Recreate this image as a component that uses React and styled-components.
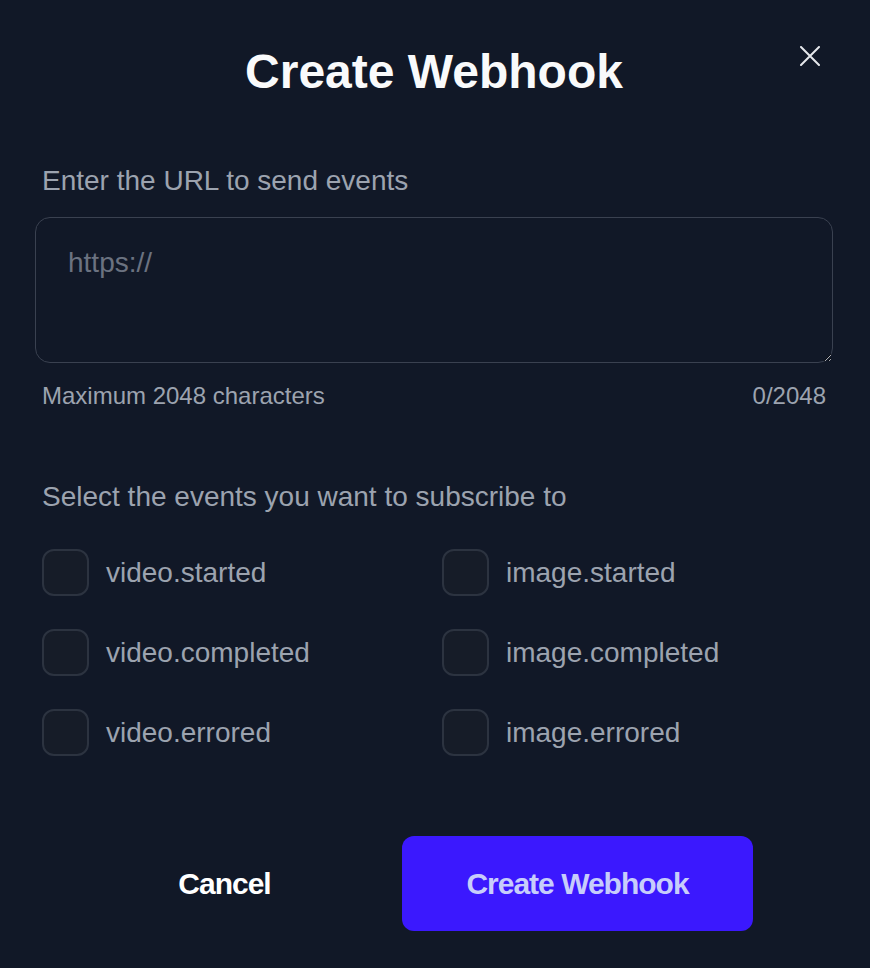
import React, { useState } from 'react';
import styled, { createGlobalStyle } from 'styled-components';

const GlobalStyle = createGlobalStyle`
  html, body {
    margin: 0;
    padding: 0;
    background: #111827;
  }
  body {
    font-family: "Liberation Sans", Arial, Helvetica, sans-serif;
  }
`;

const Dialog = styled.div`
  position: relative;
  width: 870px;
  height: 968px;
  box-sizing: border-box;
  padding: 44px 37px 0 35px;
  background: #111827;
`;

const Title = styled.h1`
  margin: 0;
  text-align: center;
  font-size: 48px;
  line-height: 56px;
  font-weight: 700;
  color: #f9fafb;
`;

const CloseButton = styled.button`
  position: absolute;
  top: 44px;
  right: 48px;
  width: 24px;
  height: 24px;
  padding: 0;
  border: none;
  background: transparent;
  cursor: pointer;
  display: flex;
  align-items: center;
  justify-content: center;
`;

const Label = styled.div`
  margin-top: ${p => p.$top}px;
  padding-left: 7px;
  font-size: 28px;
  line-height: 42px;
  color: #9ca3af;
`;

const UrlInput = styled.textarea`
  display: block;
  box-sizing: border-box;
  width: 798px;
  height: 146px;
  margin-top: 15px;
  padding: 24px 32px;
  border: 1.5px solid #3a4150;
  border-radius: 15px;
  background: #111827;
  font-family: inherit;
  font-size: 28px;
  line-height: 42px;
  color: #e5e7eb;
  outline: none;
  resize: vertical;

  &::placeholder {
    color: #6b7280;
  }
`;

const Helper = styled.div`
  display: flex;
  justify-content: space-between;
  margin-top: 15px;
  padding: 0 7px;
  font-size: 24px;
  line-height: 36px;
  color: #9ca3af;
`;

const EventGrid = styled.div`
  display: grid;
  grid-template-columns: 400px 400px;
  row-gap: 33px;
  margin-top: 31px;
  padding-left: 7px;
`;

const EventOption = styled.label`
  display: flex;
  align-items: center;
  gap: 17px;
  font-size: 28px;
  line-height: 47px;
  color: #9ca3af;
  cursor: pointer;
`;

const Box = styled.span`
  box-sizing: border-box;
  width: 47px;
  height: 47px;
  border: 2px solid #2c3340;
  border-radius: 12px;
  background: ${p => (p.$checked ? '#3b18ff' : '#161c28')};
  display: flex;
  align-items: center;
  justify-content: center;
`;

const Footer = styled.div`
  display: flex;
  gap: 2px;
  margin-top: 80px;
  padding-left: 14px;
`;

const Button = styled.button`
  width: 351px;
  height: 95px;
  border: none;
  border-radius: 12px;
  font-family: inherit;
  font-size: 30px;
  font-weight: 700;
  letter-spacing: -1px;
  cursor: pointer;
  background: ${p => (p.$primary ? '#3b18fe' : 'transparent')};
  color: ${p => (p.$primary ? '#c7cdfb' : '#ffffff')};
`;

const events = [
  'video.started',
  'image.started',
  'video.completed',
  'image.completed',
  'video.errored',
  'image.errored',
];

export default function App() {
  const [url, setUrl] = useState('');
  const [selected, setSelected] = useState({});

  const toggle = name => setSelected(s => ({ ...s, [name]: !s[name] }));

  return (
    <>
      <GlobalStyle />
      <Dialog>
        <Title>Create Webhook</Title>
        <CloseButton aria-label="Close">
          <svg width="20" height="20" viewBox="0 0 20 20">
            <path d="M1 1L19 19M19 1L1 19" stroke="#e5e7eb" strokeWidth="2" strokeLinecap="round" />
          </svg>
        </CloseButton>

        <Label $top={60}>Enter the URL to send events</Label>
        <UrlInput
          placeholder="https://"
          maxLength={2048}
          value={url}
          onChange={e => setUrl(e.target.value)}
        />
        <Helper>
          <span>Maximum 2048 characters</span>
          <span>{url.length}/2048</span>
        </Helper>

        <Label $top={62}>Select the events you want to subscribe to</Label>
        <EventGrid>
          {events.map(name => (
            <EventOption key={name} onClick={() => toggle(name)}>
              <Box $checked={selected[name]}>
                {selected[name] && (
                  <svg width="26" height="26" viewBox="0 0 24 24">
                    <path d="M5 12l5 5L19 7" stroke="#fff" strokeWidth="3" fill="none" />
                  </svg>
                )}
              </Box>
              {name}
            </EventOption>
          ))}
        </EventGrid>

        <Footer>
          <Button>Cancel</Button>
          <Button $primary>Create Webhook</Button>
        </Footer>
      </Dialog>
    </>
  );
}
